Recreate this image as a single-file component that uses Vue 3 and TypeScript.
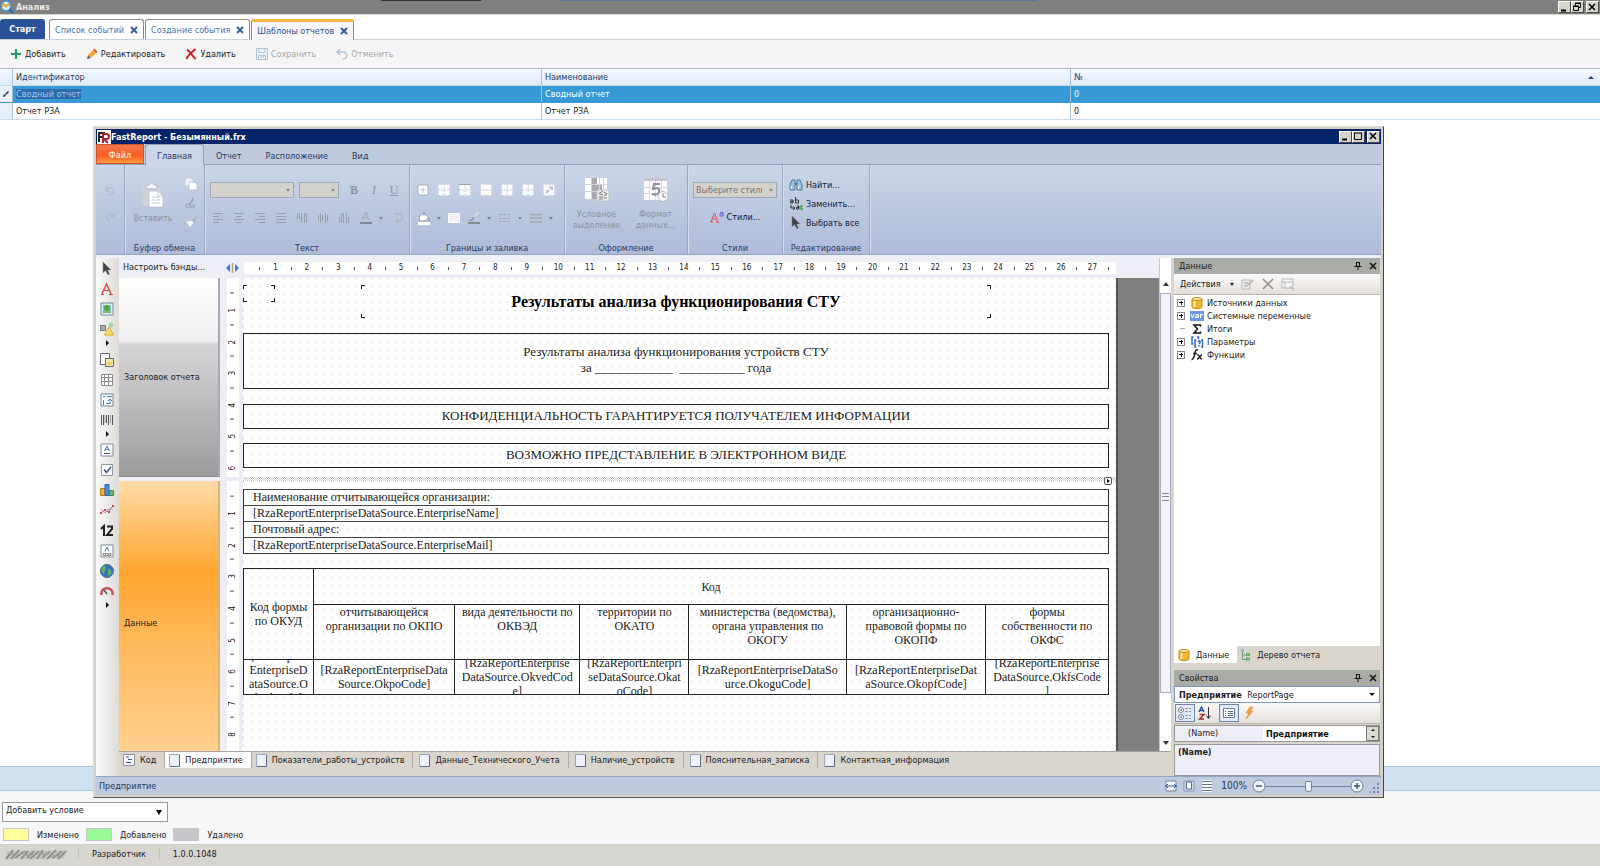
<script setup lang="ts">
import { ref } from 'vue'

interface TreeNode { label: string; icon: string; expandable: boolean }
interface CodeColumn { title: string[]; field: string[] }

const openTabs = ['Список событий', 'Создание события', 'Шаблоны отчетов']
const activeTab = ref(2)

const actions = [
  { label: 'Добавить', icon: 'plus', disabled: false },
  { label: 'Редактировать', icon: 'pencil', disabled: false },
  { label: 'Удалить', icon: 'cross', disabled: false },
  { label: 'Сохранить', icon: 'floppy', disabled: true },
  { label: 'Отменить', icon: 'undo-arrow', disabled: true },
]

const ribbonTabs = ['Главная', 'Отчет', 'Расположение', 'Вид']
const alignIcons = ['al-left', 'al-center', 'al-right', 'al-just', 'va-top', 'va-mid', 'va-bot']
const borderIcons = ['b-all', 'b-none', 'b-top', 'b-mid', 'b-none', 'b-none', 'b-edit']

const tools = [
  { id: 't-arrow', name: 'Выбор' },
  { id: 't-text', name: 'Текст' },
  { id: 't-pic', name: 'Рисунок' },
  { id: 't-shape', name: 'Фигура', more: true },
  { id: 't-sub', name: 'Подотчет' },
  { id: 't-table', name: 'Таблица' },
  { id: 't-matrix', name: 'Матрица' },
  { id: 't-bar', name: 'Штрихкод', more: true },
  { id: 't-rich', name: 'Форматированный текст' },
  { id: 't-check', name: 'Флажок' },
  { id: 't-chart', name: 'Диаграмма' },
  { id: 't-spark', name: 'Спарклайн' },
  { id: 't-zip', name: 'Индекс' },
  { id: 't-cell', name: 'Текст в ячейках' },
  { id: 't-map', name: 'Карта' },
  { id: 't-gauge', name: 'Индикатор', more: true },
]

const columns: CodeColumn[] = [
  { title: ['отчитывающейся', 'организации по ОКПО'], field: ['[RzaReportEnterpriseData', 'Source.OkpoCode]'] },
  { title: ['вида деятельности по', 'ОКВЭД'], field: ['[RzaReportEnterprise', 'DataSource.OkvedCod', 'e]'] },
  { title: ['территории по', 'ОКАТО'], field: ['[RzaReportEnterpri', 'seDataSource.Okat', 'oCode]'] },
  { title: ['министерства (ведомства),', 'органа управления по', 'ОКОГУ'], field: ['[RzaReportEnterpriseDataSo', 'urce.OkoguCode]'] },
  { title: ['организационно-', 'правовой формы по', 'ОКОПФ'], field: ['[RzaReportEnterpriseDat', 'aSource.OkopfCode]'] },
  { title: ['формы', 'собственности по', 'ОКФС'], field: ['[RzaReportEnterprise', 'DataSource.OkfsCode', ']'] },
]
const formField = ['[RzaReport', 'EnterpriseD', 'ataSource.O', 'kudCode]']

const orgRows = [
  'Наименование отчитывающейся организации:',
  '[RzaReportEnterpriseDataSource.EnterpriseName]',
  'Почтовый адрес:',
  '[RzaReportEnterpriseDataSource.EnterpriseMail]',
]

const pages = ['Показатели_работы_устройств', 'Данные_Технического_Учета', 'Наличие_устройств', 'Пояснительная_записка', 'Контактная_информация']

const tree: TreeNode[] = [
  { label: 'Источники данных', icon: 'db', expandable: true },
  { label: 'Системные переменные', icon: 'var', expandable: true },
  { label: 'Итоги', icon: 'sum', expandable: false },
  { label: 'Параметры', icon: 'param', expandable: true },
  { label: 'Функции', icon: 'fx', expandable: true },
]

const legend = [
  { label: 'Изменено', tone: 'yellow' },
  { label: 'Добавлено', tone: 'green' },
  { label: 'Удалено', tone: 'grey' },
]

const zoom = ref(50)
const propertyValue = ref('Предприятие')
</script>

<template>
  <div class="app">
    <svg class="defs" aria-hidden="true">
      <symbol id="plus" viewBox="0 0 12 12"><path d="M6 1v10M1 6h10" stroke="#1e9e62" stroke-width="2" /></symbol>
      <symbol id="pencil" viewBox="0 0 12 12"><path d="M1 11l1-4 3 3z" fill="#4b5a8a" /><path d="M2 7l5-5 3 3-5 5z" fill="#f3a62b" /><path d="M7 2l1.500-1.500 3 3L10 5z" fill="#e0533a" /></symbol>
      <symbol id="cross" viewBox="0 0 12 12"><path d="M2 1.500C5 4 8 8 10.500 11M10.500 1C7 4 3 7 1.500 11" stroke="#d01f1f" stroke-width="2" fill="none" /></symbol>
      <symbol id="floppy" viewBox="0 0 12 12"><path d="M.5.5h11v11H.5zM3 .5v4h6v-4M2.500 11.500v-4h7v4M4 9h4" stroke="#b4c4d6" fill="#edf2f7" /></symbol>
      <symbol id="undo-arrow" viewBox="0 0 12 12"><path d="M4 1L1 4l3 3M1 4h6c5 0 5 6 0 7" stroke="#b3c5da" stroke-width="1.500" fill="none" /></symbol>
      <symbol id="search-app" viewBox="0 0 14 14"><circle cx="6" cy="6" r="5" fill="#d9efff" stroke="#3c8fd0" stroke-width="1.500" /><path d="M2 7l2-3 2 3 2-3 2 2" stroke="#e6a21c" stroke-width="1.500" fill="none" /><path d="M9.500 9.500L13 13" stroke="#2a6db0" stroke-width="2.500" /></symbol>
      <symbol id="w-min" viewBox="0 0 12 11"><path d="M3 8.500h5" stroke="#000" stroke-width="2" /></symbol>
      <symbol id="w-max" viewBox="0 0 12 11"><path d="M2.500 2v6.500h7V2M2 2h8" stroke="#000" fill="none" /></symbol>
      <symbol id="w-rest" viewBox="0 0 12 11"><path d="M4.500 3.500v-2h5v4h-2M2.500 4.500h5v4h-5zM2 4h6M4 1h6" stroke="#000" fill="none" /></symbol>
      <symbol id="w-close" viewBox="0 0 12 11"><path d="M3 2l6 6M9 2L3 8" stroke="#000" stroke-width="1.500" /></symbol>
      <symbol id="fr" viewBox="0 0 14 14"><path d="M0 0h14v14H0z" fill="#fff" /><path d="M2 12V3h6M2 7h4" stroke="#222" stroke-width="2" fill="none" /><path d="M6 13V4h3c4 0 4 5 0 5H7l4 4" stroke="#b3202a" stroke-width="2" fill="none" /></symbol>

      <symbol id="r-undo" viewBox="0 0 12 12"><path d="M2 3v4h4M2.500 6.500C4 3 9 3 9.500 6.500S7 10 5 10" stroke="#a9b3c6" fill="none" /></symbol>
      <symbol id="r-redo" viewBox="0 0 12 12"><path d="M10 3v4H6M9.500 6.500C8 3 3 3 2.500 6.500S4 10 6 10" stroke="#a9b3c6" fill="none" /></symbol>
      <symbol id="paste" viewBox="0 0 24 26"><path d="M1 4h18v20H1z" fill="#cfd2d8" /><path d="M5 3h3c0-3 5-3 5 0h3v4H5z" fill="#f0f1f4" stroke="#b4b8c2" /><path d="M8 9h9l5 5v11H8z" fill="#fff" stroke="#bcc2ce" /><path d="M17 9v5h5M10.500 15h8M10.500 18h9M10.500 21h9" stroke="#c2c8d2" fill="none" /></symbol>
      <symbol id="copy" viewBox="0 0 14 14"><path d="M1 1h6l2 2v6H1z" fill="#f4f5f8" stroke="#c6ccd8" /><path d="M5 5h6l2 2v6H5z" fill="#fff" stroke="#b9c0ce" /></symbol>
      <symbol id="cut" viewBox="0 0 12 12"><path d="M8 0L5 8M9 2L4 8" stroke="#959daf" fill="none" /><circle cx="3" cy="9" r="2" stroke="#959daf" fill="none" /><circle cx="8" cy="9.500" r="1.500" stroke="#959daf" fill="none" /></symbol>
      <symbol id="brush" viewBox="0 0 14 12"><path d="M13 0L8 4l2 2z" fill="#a2a8b4" /><path d="M1 5l7-1 2 3-4 5z" fill="#f2f2f3" stroke="#b9bdc8" /></symbol>
      <symbol id="al-left" viewBox="0 0 12 12"><path d="M1 1.500h10M1 4.500h6M1 7.500h10M1 10.500h6" stroke="#98a0b0" /></symbol>
      <symbol id="al-center" viewBox="0 0 12 12"><path d="M1 1.500h10M3 4.500h6M1 7.500h10M3 10.500h6" stroke="#98a0b0" /></symbol>
      <symbol id="al-right" viewBox="0 0 12 12"><path d="M1 1.500h10M5 4.500h6M1 7.500h10M5 10.500h6" stroke="#98a0b0" /></symbol>
      <symbol id="al-just" viewBox="0 0 12 12"><path d="M1 1.500h10M1 4.500h10M1 7.500h10M1 10.500h10" stroke="#98a0b0" /></symbol>
      <symbol id="va-top" viewBox="0 0 12 12"><path d="M1.500 1v6M3.500 1v6M5.500 1v10M8.500 1v10M10.500 1v10" stroke="#98a0b0" /></symbol>
      <symbol id="va-mid" viewBox="0 0 12 12"><path d="M1.500 3v6M3.500 1v10M5.500 3v6M8.500 1v10M10.500 3v6" stroke="#98a0b0" /></symbol>
      <symbol id="va-bot" viewBox="0 0 12 12"><path d="M1.500 5v6M3.500 1v10M5.500 1v10M8.500 1v10M10.500 5v6" stroke="#98a0b0" /></symbol>
      <symbol id="fcolor" viewBox="0 0 14 14"><path d="M3 9l4-8 3 8M4 6.500h5" stroke="#a0a7b5" fill="none" /><path d="M1 11h12v2H1z" fill="#848890" /></symbol>
      <symbol id="rot" viewBox="0 0 12 12"><path d="M2 2h4c6-1 6 7 0 7H4M6 7L4 9l2 2" stroke="#b6b8be" stroke-width="2" fill="none" /></symbol>
      <symbol id="b-all" viewBox="0 0 12 12"><path d="M1 1h10v10H1z" fill="#fff" stroke="#a5adbd" /><path d="M6 3v6M3 6h6" stroke="#bfc5d0" /></symbol>
      <symbol id="b-none" viewBox="0 0 12 12"><path d="M1 1h10v10H1z" fill="#fff" stroke="#fff" stroke-dasharray="2 1" /><path d="M6 0v12M0 6h12" stroke="#c3c9d6" stroke-dasharray="2 1" /></symbol>
      <symbol id="b-top" viewBox="0 0 12 12"><path d="M1 1h10v10H1z" fill="#fff" stroke="#fff" stroke-dasharray="2 1" /><path d="M6 0v12M0 6h12" stroke="#c3c9d6" stroke-dasharray="2 1" /><path d="M0 .5h12" stroke="#9aa3b5" /></symbol>
      <symbol id="b-mid" viewBox="0 0 12 12"><path d="M1 1h10v10H1z" fill="#fff" stroke="#fff" stroke-dasharray="2 1" /><path d="M0 6h12" stroke="#c3c9d6" stroke-dasharray="2 1" /></symbol>
      <symbol id="b-edit" viewBox="0 0 12 12"><path d="M1 1h10v10H1z" fill="#fafafc" stroke="#fff" stroke-dasharray="2 1" /><path d="M3 9l3-3M6 3.500h3V6" stroke="#b9bfca" stroke-width="2" fill="none" /></symbol>
      <symbol id="bucket" viewBox="0 0 14 14"><path d="M2 6l5-4 5 5-5 3H3z" fill="#fff" stroke="#9ea6b6" /><path d="M7 1v4M12 7v3" stroke="#868e9e" /><path d="M1 11h12v3H1z" fill="#fff" /></symbol>
      <symbol id="swatch" viewBox="0 0 12 12"><path d="M.5 1.500h11v9H.5z" fill="#f1eff3" stroke="#fff" /></symbol>
      <symbol id="pen" viewBox="0 0 14 14"><path d="M12 1L7 6" stroke="#d9dbe0" stroke-width="2" /><path d="M7 6l-2 3-3 .5" stroke="#8f97a6" stroke-width="1.500" fill="none" /><path d="M1 11h12v2H1z" fill="#848890" /></symbol>
      <symbol id="ldash" viewBox="0 0 14 12"><path d="M1 2.500h12M1 6.500h12M1 9.500h12" stroke="#a0a8b8" stroke-dasharray="3 1" /></symbol>
      <symbol id="lwide" viewBox="0 0 14 12"><path d="M1 2.500h12M1 6h12M1 10h12" stroke="#a2a7b0" stroke-width="1.500" /></symbol>
      <symbol id="cond" viewBox="0 0 26 26"><path d="M1 1h22v21H1z" fill="#fff" /><path d="M7 1h6v21H7zM7 8h11v6H7z" fill="#a8a9ad" /><path d="M1 7.500h22M1 14.500h22M7.500 1v21M15.500 1v21M19.500 1v21" stroke="#d0d4db" /><path d="M13 13h12v11H13z" fill="#eee" stroke="#c2c4ca" /><path d="M19 14l-4 2.500 4 1.500M15 20h4M15 22h4M20 15l3 2-3 2M20 21h3" stroke="#777" fill="none" /></symbol>
      <symbol id="fmt" viewBox="0 0 26 26"><path d="M1 1h23v22H1z" fill="#fff" /><path d="M1 1h23v3H1z" fill="#c5c5c9" /><path d="M1 10.500h23M1 16.500h23M6.500 4v19M12.500 4v19M18.500 4v19" stroke="#d3d6dd" /><path d="M17 7h-6l-1 5c5-2 7 0 6 3s-4 3-7 2" stroke="#8c8e93" stroke-width="2" fill="none" /><circle cx="20" cy="19.500" r="5" fill="#f6f6f6" stroke="#b6b8bd" /><path d="M20 16v4h3" stroke="#888" fill="none" /></symbol>
      <symbol id="find" viewBox="0 0 14 12"><path d="M3 1h3v10H1V6zM11 1H8v10h5V6z" fill="#9cc3da" stroke="#4f7fa6" /><path d="M6 5h2" stroke="#3f6f96" stroke-width="2" /><path d="M2.500 7v3M9.500 7v3" stroke="#fff" /></symbol>
      <symbol id="repl" viewBox="0 0 14 14"><path d="M1 3h3v3H1.500V4.500H4M6.500 0v6h3V3h-3M2 8v3h4M4 9l2 2-2 2" stroke="#333" fill="none" /><path d="M8 9h2v3H7.500v-1.500H10" stroke="#333" fill="none" /><path d="M14 9h-2v3h2" stroke="#3aa63a" stroke-width="1.500" fill="none" /></symbol>
      <symbol id="t-arrow" viewBox="0 0 14 14"><path d="M3 0v11l2.500-2.500L8 13l1.500-1-2-4H11z" fill="#444" stroke="#888" stroke-width=".5" /></symbol>
      <symbol id="styles" viewBox="0 0 14 12"><path d="M1 11L4.500 2 8 11M2.500 8h4M0 11h3M6 11h3" stroke="#e0525a" fill="none" /><path d="M10 1.500h3V5h-3V3h3" stroke="#7460d8" fill="none" /></symbol>

      <symbol id="t-text" viewBox="0 0 14 14"><path d="M2 12L6.500 2 11 12" stroke="#d94a45" stroke-width="1.500" fill="none" /><path d="M4 8.500h5M1 12.500h3M9 12.500h4" stroke="#d94a45" /></symbol>
      <symbol id="t-pic" viewBox="0 0 14 14"><path d="M1 1h12v12H1z" fill="#dfeef8" stroke="#6b8c98" /><path d="M3 3h8v6H3z" fill="#7fc0d8" /><circle cx="7" cy="6" r="3" fill="#4fa543" /><path d="M3 9h8v2H3z" fill="#79b56c" /></symbol>
      <symbol id="t-shape" viewBox="0 0 14 14"><path d="M.5 3.500h5v5h-5z" fill="#aaa" stroke="#777" /><circle cx="11" cy="3" r="2.500" fill="#9bd8a0" /><path d="M9 5l4.500 8h-9z" fill="#ffe066" stroke="#d9a520" /></symbol>
      <symbol id="t-sub" viewBox="0 0 14 14"><path d="M.5.5h9v11h-9z" fill="#fff" stroke="#667" /><path d="M5.500 5.500h8v8h-8z" fill="#f5e7a0" stroke="#667" /><path d="M7 9h5v3H7z" fill="#e8ce5c" /></symbol>
      <symbol id="t-table" viewBox="0 0 14 14"><path d="M1.500 1.500h11v11h-11zM1.500 4.500h11M1.500 8.500h11M4.500 1.500v11M8.500 1.500v11" fill="#fff" stroke="#8b8b92" /></symbol>
      <symbol id="t-matrix" viewBox="0 0 14 14"><path d="M1 1h12v12H1z" fill="#fff" stroke="#6d8796" /><path d="M3 3.500h2M7 3.500h5M3.500 7v5M6 10.500h4V7M8 8l2-2 2 2" stroke="#3d7cb5" fill="none" /></symbol>
      <symbol id="t-bar" viewBox="0 0 14 14"><path d="M1.500 2v10M3.500 2v10M6.500 2v8M8.500 2v10M12.500 2v10" stroke="#555" /><path d="M5 2v8M10.500 2v8" stroke="#555" stroke-width=".5" /></symbol>
      <symbol id="t-rich" viewBox="0 0 14 14"><path d="M1 1h12v12H1z" fill="#fff" stroke="#7d8c99" /><path d="M4.500 8L7 3l2.500 5M5.500 6.500h3" stroke="#3d7cc5" fill="none" /><path d="M4 10.500h6" stroke="#555" /></symbol>
      <symbol id="t-check" viewBox="0 0 14 14"><path d="M1.500 1.500h11v11h-11z" fill="#fff" stroke="#8a97a8" /><path d="M4 6.500l2.500 3L11 4" stroke="#35598f" stroke-width="1.500" fill="none" /></symbol>
      <symbol id="t-chart" viewBox="0 0 14 14"><path d="M.5 5.500h4v7h-4z" fill="#f0b429" stroke="#b98512" /><path d="M5 1.500h4v11H5z" fill="#4f8de0" stroke="#2f62b0" /><path d="M9.500 7.500h4v5h-4z" fill="#63b85a" stroke="#3f8f3a" /></symbol>
      <symbol id="t-spark" viewBox="0 0 14 14"><path d="M1 10l4-3 3 2 5-6" stroke="#d9484b" fill="none" /><path d="M1 6l4 4 3-4 5 1" stroke="#6a8ed0" fill="none" stroke-dasharray="2 1" /><path d="M0 9h2v2H0zM4 6h2v2H4zM12 2h2v2h-2zM8 8h2v2H8z" fill="#d9484b" /></symbol>
      <symbol id="t-zip" viewBox="0 0 14 14"><path d="M1 5l3-3v10M7 2.500h5V5l-5 6h6" stroke="#222" stroke-width="2" fill="none" /></symbol>
      <symbol id="t-cell" viewBox="0 0 14 14"><path d="M1 1h12v12H1z" fill="#fff" stroke="#7d8c99" /><path d="M5 7.500L7 3l2 4.500" stroke="#3d7cc5" fill="none" /><path d="M3 9.500h8v2H3zM5.500 9.500v2M8.500 9.500v2" stroke="#888" fill="none" /></symbol>
      <symbol id="t-map" viewBox="0 0 14 14"><circle cx="7" cy="7" r="6.500" fill="#3873c4" stroke="#55697c" /><path d="M4 2c3 0 2 3 1 4s0 5-2 3-2-6 1-7zM9 5c3 0 3 4 1 6s-3-1-2-2-1-4 1-4z" fill="#5db560" /></symbol>
      <symbol id="t-gauge" viewBox="0 0 14 14"><path d="M1.500 11C0 2 14 2 12.500 11" stroke="#c1544f" stroke-width="2.500" fill="none" /><path d="M7 10L4 6" stroke="#555" stroke-width="1.500" /></symbol>

      <symbol id="split" viewBox="0 0 14 10"><path d="M4 1v8L0 5zM9 1v8l4-4z" fill="#3f77cf" /><path d="M6.500 0v10" stroke="#aaa08a" stroke-width="1.500" /></symbol>
      <symbol id="pin" viewBox="0 0 10 10"><path d="M3.500 1v4M6.500 1v4M3 1.500h4M1.500 5.500h7M5 6v3" stroke="#111" fill="none" /></symbol>
      <symbol id="x" viewBox="0 0 10 10"><path d="M2 2l6 6M8 2L2 8" stroke="#111" stroke-width="1.500" /></symbol>
      <symbol id="d-edit" viewBox="0 0 14 12"><path d="M1 2h8v9H1z" fill="#eee" stroke="#b9b9b9" /><path d="M3 5h4M3 8h3M6 8l6-6" stroke="#b2b2b2" stroke-width="1.500" /></symbol>
      <symbol id="d-del" viewBox="0 0 12 12"><path d="M1 1l10 10M11 1L1 11" stroke="#8f8f8f" stroke-width="1.500" /></symbol>
      <symbol id="d-view" viewBox="0 0 14 12"><path d="M1 1h11v9H1zM1 4h11M4 4v6" fill="#f4f4f4" stroke="#bbb" /><path d="M9 8l4 4" stroke="#bbb" stroke-width="1.500" /></symbol>
      <symbol id="db" viewBox="0 0 14 12"><path d="M2 2v8c0 2 10 2 10 0V2" fill="#f2b632" stroke="#c68c14" /><ellipse cx="7" cy="2" rx="5" ry="1.500" fill="#ffe9a6" stroke="#c68c14" /><path d="M4.500 4v6" stroke="#ffe9a6" stroke-width="2" /></symbol>
      <symbol id="var" viewBox="0 0 14 10"><path d="M0 0h14v10H0z" fill="#6f97e4" /><path d="M1 3l1.500 4L4 3M5.500 3.500h3v3h-3V5h3M10.500 7V3.500H13" stroke="#fff" fill="none" /></symbol>
      <symbol id="sum" viewBox="0 0 14 12"><path d="M10.500 3.500V2H4l3.500 4L4 10h6.500V8.500" stroke="#111" stroke-width="1.500" fill="none" /></symbol>
      <symbol id="param" viewBox="0 0 14 12"><path d="M3.500 1H2v7h1.500M6.500 4H5v7h1.500M11 4h1.500v7H11M7 1h1.500v2M8 6c0-2 3-1 2 .5L9 8M9 9v1.500" stroke="#2d6cc0" stroke-width="1.500" fill="none" /></symbol>
      <symbol id="fx" viewBox="0 0 14 12"><path d="M8 1c-3-1-3 3-3.500 5S3 11 1.500 10.500M3 4.500h4M7 6c3-1 2 4 5 4M12 6c-2 0-3 4-5 4" stroke="#222" stroke-width="1.500" fill="none" /></symbol>
      <symbol id="rtree" viewBox="0 0 12 12"><path d="M1 0h3v3H1z" fill="#86b4e8" /><path d="M2.500 3v7.500H6M2.500 6H6" stroke="#6a9f7a" fill="none" /><path d="M6.500 4.500h3v2h-3zM6.500 9h3v2h-3z" fill="#bfe8b8" stroke="#4c9f55" /></symbol>
      <symbol id="p-cat" viewBox="0 0 14 14"><circle cx="3" cy="4" r="2.500" fill="#fff" stroke="#6d86a8" /><circle cx="3" cy="11" r="2.500" fill="#fff" stroke="#6d86a8" /><path d="M2 4h2M2 11h2M3 3v2M3 10v2" stroke="#234" stroke-width=".5" /><path d="M7 2.500h6M7 5.500h6M7 9.500h6M7 12.500h6" stroke="#909cae" stroke-dasharray="3 1" /></symbol>
      <symbol id="p-az" viewBox="0 0 14 14"><path d="M1 6l2.500-5L6 6M2 4.500h3" stroke="#34529a" stroke-width="1.500" fill="none" /><path d="M1.500 8.500H6L1.500 13H6" stroke="#a33636" stroke-width="1.500" fill="none" /><path d="M10.500 1v11M8.500 9.500l2 3 2-3" stroke="#333" fill="none" /></symbol>
      <symbol id="p-prop" viewBox="0 0 14 14"><path d="M1.500 2.500h11v9h-11z" fill="#fff" stroke="#6b7ba0" /><path d="M3 5.500h1M3 7.500h1M3 9.500h1M6 5.500h5M6 7.500h5M6 9.500h5" stroke="#567" /></symbol>
      <symbol id="p-ev" viewBox="0 0 14 14"><path d="M8 1L4 7h3l-3 6 7-8H8l3-4z" fill="#f4a63a" stroke="#c9752a" stroke-width=".5" /></symbol>
      <symbol id="page" viewBox="0 0 11 13"><path d="M.5.5h10v12H.5z" fill="#edf1fc" stroke="#9aa4b8" /><path d="M1 12.500h9.500V1" stroke="#5c6a8c" fill="none" /></symbol>
      <symbol id="code" viewBox="0 0 12 12"><path d="M.5.5h11v11H.5z" fill="#f6f8fd" stroke="#8b95aa" /><path d="M3 3h3M5 5.500h4M3 8.500h5" stroke="#38578f" /></symbol>
      <symbol id="s-width" viewBox="0 0 12 12"><path d="M1 1h10v10H1z" fill="#f2f5fa" stroke="#77869f" /><path d="M0 6h12M3 4L1 6l2 2M9 4l2 2-2 2" stroke="#2f5ca5" fill="none" /></symbol>
      <symbol id="s-page" viewBox="0 0 12 12"><path d="M1 1h10v10H1z" fill="#cfd9ea" stroke="#8795ae" /><path d="M3.500 2h5v7h-5z" fill="#fff" stroke="#5c6c8c" /></symbol>
      <symbol id="s-list" viewBox="0 0 12 12"><path d="M1 0h10v12H1z" fill="#f7f9fc" /><path d="M1 1.500h10M1 4.500h10M1 7.500h10M1 10.500h10" stroke="#66748c" /></symbol>
      <symbol id="minus-c" viewBox="0 0 14 14"><circle cx="7" cy="7" r="6" fill="#eef2f9" stroke="#71809b" /><path d="M4 7h6" stroke="#4a566e" stroke-width="1.500" /></symbol>
      <symbol id="plus-c" viewBox="0 0 14 14"><circle cx="7" cy="7" r="6" fill="#eef2f9" stroke="#71809b" /><path d="M4 7h6M7 4v6" stroke="#4a566e" stroke-width="1.500" /></symbol>
      <symbol id="grip" viewBox="0 0 10 10"><path d="M7 0h2v2H7zM7 4h2v2H7zM3 4h2v2H3zM7 8h2v2H7zM3 8h2v2H3z" fill="#7588b0" /><path d="M0 8h1v2H0z" fill="#7588b0" /></symbol>
      <symbol id="row-edit" viewBox="0 0 8 8"><path d="M1 7l1-3 2 2zM3 4l3-3 1 1-3 3z" fill="#1b2b4b" /></symbol>
      <symbol id="scribble" viewBox="0 0 66 14"><path d="M4 4h60l-4 8H2z" fill="#c3c2be" /><path d="M3 12l7-9M8 12l8-9M12 11l10-7M18 12l7-8M24 11l7-7M27 12l9-8M34 12l6-9M39 11l8-7M44 12l9-9M50 11l9-7M55 12l8-8" stroke="#85857f" stroke-width="1.500" fill="none" /><path d="M5 7h10M20 8h12M36 7h10M48 9h10" stroke="#a2a19c" stroke-width="1.500" /></symbol>
    </svg>

    <header class="main-title">
      <svg class="i14"><use href="#search-app" /></svg>
      <h1>Анализ</h1>
      <div class="win-buttons">
        <button aria-label="Свернуть"><svg><use href="#w-min" /></svg></button>
        <button aria-label="Восстановить"><svg><use href="#w-rest" /></svg></button>
        <button class="close" aria-label="Закрыть"><svg><use href="#w-close" /></svg></button>
      </div>
    </header>

    <nav class="tabs">
      <button class="start">Старт</button>
      <div v-for="(t, i) in openTabs" :key="t" class="tab" :class="{ active: i === activeTab }">
        <button class="tab-name" @click="activeTab = i">{{ t }}</button>
        <button class="tab-x" :aria-label="'Закрыть ' + t"><svg viewBox="0 0 8 8"><path d="M1 1l6 6M7 1L1 7" stroke="#35609f" stroke-width="2" /></svg></button>
      </div>
    </nav>

    <div class="actions">
      <button v-for="a in actions" :key="a.label" :disabled="a.disabled">
        <svg class="i12"><use :href="'#' + a.icon" /></svg>{{ a.label }}
      </button>
    </div>

    <main class="desk">
      <table class="list">
        <colgroup><col class="c-ind" /><col /><col /><col /></colgroup>
        <thead>
          <tr><th></th><th>Идентификатор</th><th>Наименование</th><th>№<i class="sort"></i></th></tr>
        </thead>
        <tbody>
          <tr class="sel"><td><svg class="i8"><use href="#row-edit" /></svg></td><td><span class="hl">Сводный отчет</span></td><td>Сводный отчет</td><td>0</td></tr>
          <tr><td></td><td>Отчет РЗА</td><td>Отчет РЗА</td><td>0</td></tr>
        </tbody>
      </table>
      <div class="band-blue"></div>
    </main>

    <footer class="bottom">
      <label class="cond">
        <select aria-label="Добавить условие"><option>Добавить условие</option></select>
      </label>
      <div class="legend">
        <span v-for="l in legend" :key="l.label"><i :class="l.tone"></i>{{ l.label }}</span>
      </div>
      <div class="status">
        <svg class="scrib"><use href="#scribble" /></svg>
        <span>Разработчик</span>
        <span>1.0.0.1048</span>
      </div>
    </footer>

    <section class="window">
      <header class="w-title">
        <svg class="i14"><use href="#fr" /></svg>
        <h2>FastReport - Безымянный.frx</h2>
        <div class="win-buttons">
          <button aria-label="Свернуть"><svg><use href="#w-min" /></svg></button>
          <button aria-label="Развернуть"><svg><use href="#w-max" /></svg></button>
          <button class="close" aria-label="Закрыть"><svg><use href="#w-close" /></svg></button>
        </div>
      </header>

      <nav class="r-tabs">
        <button class="file">Файл</button>
        <button v-for="(t, i) in ribbonTabs" :key="t" :class="{ on: i === 0 }">{{ t }}</button>
      </nav>

      <div class="ribbon">
        <div class="g g-undo">
          <button aria-label="Отменить"><svg class="i12"><use href="#r-undo" /></svg></button>
          <button aria-label="Повторить"><svg class="i12"><use href="#r-redo" /></svg></button>
        </div>
        <div class="g g-clip">
          <div class="g-body">
            <button class="big"><svg class="i26"><use href="#paste" /></svg>Вставить</button>
            <div class="stack">
              <button aria-label="Копировать"><svg class="i14"><use href="#copy" /></svg></button>
              <button aria-label="Вырезать"><svg class="i12"><use href="#cut" /></svg></button>
              <button aria-label="Формат по образцу"><svg class="i14"><use href="#brush" /></svg></button>
            </div>
          </div>
          <h3>Буфер обмена</h3>
        </div>
        <div class="g g-text">
          <div class="g-body rows">
            <div class="line">
              <label class="combo wide"><select aria-label="Шрифт" disabled><option></option></select></label>
              <label class="combo narrow"><select aria-label="Размер" disabled><option></option></select></label>
              <button class="fs b">B</button><button class="fs it">I</button><button class="fs u">U</button>
            </div>
            <div class="line icons">
              <button v-for="a in alignIcons" :key="a" :aria-label="a"><svg class="i12"><use :href="'#' + a" /></svg></button>
              <button class="drop" aria-label="Цвет текста"><svg class="i14"><use href="#fcolor" /></svg></button>
              <button aria-label="Поворот"><svg class="i12"><use href="#rot" /></svg></button>
            </div>
          </div>
          <h3>Текст</h3>
        </div>
        <div class="g g-border">
          <div class="g-body rows">
            <div class="line icons">
              <button v-for="(b, i) in borderIcons" :key="i" :aria-label="'Граница ' + (i + 1)"><svg class="i12"><use :href="'#' + b" /></svg></button>
            </div>
            <div class="line icons spread">
              <button class="drop" aria-label="Заливка"><svg class="i14"><use href="#bucket" /></svg></button>
              <button aria-label="Стиль заливки"><svg class="i12"><use href="#swatch" /></svg></button>
              <button class="drop" aria-label="Цвет линии"><svg class="i14"><use href="#pen" /></svg></button>
              <button class="drop" aria-label="Стиль линии"><svg class="i14"><use href="#ldash" /></svg></button>
              <button class="drop" aria-label="Толщина линии"><svg class="i14"><use href="#lwide" /></svg></button>
            </div>
          </div>
          <h3>Границы и заливка</h3>
        </div>
        <div class="g g-design">
          <div class="g-body">
            <button class="big"><svg class="i26"><use href="#cond" /></svg>Условное<br />выделение</button>
            <button class="big"><svg class="i26"><use href="#fmt" /></svg>Формат<br />данных...</button>
          </div>
          <h3>Оформление</h3>
        </div>
        <div class="g g-styles">
          <div class="g-body rows">
            <label class="combo full"><select aria-label="Стиль" disabled><option>Выберите стиль</option></select></label>
            <button class="cmd"><svg class="i14"><use href="#styles" /></svg>Стили...</button>
          </div>
          <h3>Стили</h3>
        </div>
        <div class="g g-edit">
          <div class="g-body cmds">
            <button class="cmd"><svg class="i14"><use href="#find" /></svg>Найти...</button>
            <button class="cmd"><svg class="i14"><use href="#repl" /></svg>Заменить...</button>
            <button class="cmd"><svg class="i14"><use href="#t-arrow" /></svg>Выбрать все</button>
          </div>
          <h3>Редактирование</h3>
        </div>
      </div>

      <div class="work">
        <div class="toolbox">
          <template v-for="t in tools" :key="t.id">
            <button :aria-label="t.name"><svg class="i14"><use :href="'#' + t.id" /></svg></button>
            <i v-if="t.more" class="more"></i>
          </template>
        </div>

        <div class="center">
          <div class="designer">
            <div class="bands">
              <button class="cfg">Настроить бэнды...</button>
              <div class="band title-band">Заголовок отчета</div>
              <div class="band data-band">Данные</div>
            </div>
            <div class="surface">
              <div class="top">
                <svg class="split"><use href="#split" /></svg>
                <div class="hruler"><span v-for="n in 27" :key="n">{{ n }}</span><span class="tail"></span></div>
              </div>
              <div class="canvas">
                <div class="vrulers">
                  <div class="vruler first"><span v-for="n in 6" :key="n">{{ n }}</span></div>
                  <div class="vruler"><span v-for="n in 8" :key="n">{{ n }}</span></div>
                </div>
                <div class="sheet">
                  <div class="zone zone-title">
                    <div class="heads">
                      <div class="obj small"><i></i></div>
                      <div class="obj title"><i></i>Результаты анализа функционирования СТУ</div>
                    </div>
                    <div class="box tall">Результаты анализа функционирования устройств СТУ<br />за ____________&nbsp; __________ года</div>
                    <div class="box">КОНФИДЕНЦИАЛЬНОСТЬ ГАРАНТИРУЕТСЯ ПОЛУЧАТЕЛЕМ ИНФОРМАЦИИ</div>
                    <div class="box last">ВОЗМОЖНО ПРЕДСТАВЛЕНИЕ В ЭЛЕКТРОННОМ ВИДЕ</div>
                  </div>
                  <div class="gap"><i class="expander"></i></div>
                  <div class="zone zone-data">
                    <div class="org"><div v-for="r in orgRows" :key="r">{{ r }}</div></div>
                    <table class="codes">
                      <colgroup><col class="k0" /><col class="k1" /><col class="k2" /><col class="k3" /><col class="k4" /><col class="k5" /><col class="k6" /></colgroup>
                      <tbody>
                        <tr class="h1"><th rowspan="2">Код формы<br />по ОКУД</th><th colspan="6">Код</th></tr>
                        <tr class="h2"><th v-for="c in columns" :key="c.title[0]"><div v-for="l in c.title" :key="l">{{ l }}</div></th></tr>
                        <tr class="h3">
                          <td><div class="clip"><span v-for="l in formField" :key="l">{{ l }}</span></div></td>
                          <td v-for="c in columns" :key="c.title[0]"><div class="clip"><span v-for="l in c.field" :key="l">{{ l }}</span></div></td>
                        </tr>
                      </tbody>
                    </table>
                  </div>
                </div>
                <div class="void"></div>
              </div>
            </div>
            <div class="vscroll"><i class="up"></i><div class="thumb"></div><i class="down"></i></div>
          </div>
          <nav class="page-tabs">
            <button><svg class="i12"><use href="#code" /></svg>Код</button>
            <button class="on"><svg class="ip"><use href="#page" /></svg>Предприятие</button>
            <button v-for="p in pages" :key="p"><svg class="ip"><use href="#page" /></svg>{{ p }}</button>
          </nav>
        </div>

        <aside class="side">
          <section class="panel data">
            <header class="p-title"><h3>Данные</h3><button aria-label="Закрепить"><svg class="i10"><use href="#pin" /></svg></button><button aria-label="Закрыть панель"><svg class="i10"><use href="#x" /></svg></button></header>
            <div class="p-bar">
              <button class="drop dark">Действия</button>
              <button aria-label="Изменить"><svg class="i14"><use href="#d-edit" /></svg></button>
              <button aria-label="Удалить"><svg class="i12"><use href="#d-del" /></svg></button>
              <button aria-label="Просмотр"><svg class="i14"><use href="#d-view" /></svg></button>
            </div>
            <ul class="tree">
              <li v-for="n in tree" :key="n.label">
                <i class="exp" :class="{ none: !n.expandable }"></i><svg class="i14"><use :href="'#' + n.icon" /></svg>{{ n.label }}
              </li>
            </ul>
            <nav class="p-tabs">
              <button class="on"><svg class="i14"><use href="#db" /></svg>Данные</button>
              <button><svg class="i12"><use href="#rtree" /></svg>Дерево отчета</button>
            </nav>
          </section>
          <section class="panel props">
            <header class="p-title"><h3>Свойства</h3><button aria-label="Закрепить"><svg class="i10"><use href="#pin" /></svg></button><button aria-label="Закрыть панель"><svg class="i10"><use href="#x" /></svg></button></header>
            <button class="object"><b>Предприятие</b> ReportPage<i></i></button>
            <div class="p-bar tools">
              <button class="on" aria-label="По категориям"><svg class="i14"><use href="#p-cat" /></svg></button>
              <button aria-label="По алфавиту"><svg class="i14"><use href="#p-az" /></svg></button>
              <button class="on sep" aria-label="Свойства"><svg class="i14"><use href="#p-prop" /></svg></button>
              <button aria-label="События"><svg class="i14"><use href="#p-ev" /></svg></button>
            </div>
            <div class="prop-row">
              <label for="prop-name">(Name)</label>
              <input id="prop-name" v-model="propertyValue" />
              <span class="spin"><i class="up"></i><i class="down"></i></span>
            </div>
            <div class="help">(Name)</div>
          </section>
        </aside>
      </div>

      <footer class="w-status">
        <span>Предприятие</span>
        <div class="zoom">
          <button aria-label="По ширине"><svg class="i12"><use href="#s-width" /></svg></button>
          <button aria-label="Страница"><svg class="i12"><use href="#s-page" /></svg></button>
          <button aria-label="Список"><svg class="i12"><use href="#s-list" /></svg></button>
          <span class="pct">100%</span>
          <button aria-label="Уменьшить"><svg class="i14"><use href="#minus-c" /></svg></button>
          <input v-model="zoom" type="range" min="0" max="100" aria-label="Масштаб" />
          <button aria-label="Увеличить"><svg class="i14"><use href="#plus-c" /></svg></button>
          <svg class="i10 gripper"><use href="#grip" /></svg>
        </div>
      </footer>
    </section>
  </div>
</template>

<style>
html, body, #app { height: 100%; }
body { margin: 0; }
</style>

<style scoped>
* { box-sizing: border-box; }
.app {
  position: relative;
  display: flex;
  flex-direction: column;
  min-height: 100%;
  overflow: hidden;
  background: #fff;
  color: #222;
  font-family: "DejaVu Sans Condensed", "DejaVu Sans", sans-serif;
  font-size: 9px;
  line-height: 12px;
}
.defs { position: absolute; width: 0; height: 0; }
button { margin: 0; padding: 0; border: 0; background: none; color: inherit; font: inherit; line-height: inherit; white-space: nowrap; }
h1, h2, h3 { margin: 0; font: inherit; line-height: inherit; }
svg { display: block; flex: none; }
.i8 { width: 8px; height: 8px; }
.i10 { width: 10px; height: 10px; }
.i12 { width: 12px; height: 12px; }
.i14 { width: 14px; height: 14px; }
.ip { width: 11px; height: 13px; }
.i26 { width: 26px; height: 26px; }

/* main frame */
.main-title { display: flex; align-items: center; height: 15px; gap: 2px; background: #808080; border-bottom: 1px solid #d4d4d0; background-image: linear-gradient(#333, #333), linear-gradient(#5577a0, #5577a0); background-repeat: no-repeat; background-size: 100px 1px, 475px 1px; background-position: 381px 0, 562px 0; color: #ececec; }
.main-title h1 { flex: 1; font-weight: bold; }
.win-buttons { display: flex; padding-right: 1px; }
.win-buttons button { width: 13px; height: 12px; background: #d6d3cb; border: 1px solid; border-color: #fff #444 #444 #fff; }
.win-buttons svg { width: 12px; height: 11px; margin: -1px; }
.win-buttons .close { margin-left: 2px; }
.tabs { display: flex; align-items: flex-end; height: 25px; padding-top: 4px; border-bottom: 1px solid #ccd3d8; }
.start { width: 45px; height: 20px; margin-right: 4px; border-radius: 3px 3px 0 0; background: #2a5298; color: #fff; font-weight: bold; }
.tab { display: flex; align-items: center; height: 20px; margin-right: 1px; padding: 0 5px; gap: 6px; border: 1px solid #8a8a8a; border-bottom: 0; border-radius: 3px 3px 0 0; background: #fff; color: #4a74ae; }
.tab.active { height: 21px; margin-bottom: -1px; border-top: 3px solid #f5b93e; background: #f7f7f7; color: #2c4f96; }
.tab-x svg { width: 8px; height: 8px; }
.actions { display: flex; align-items: center; height: 29px; padding: 0 10px 1px; gap: 20px; border-bottom: 1px solid #a9bccb; background: #f5f5f5; }
.actions button { display: flex; align-items: center; gap: 3px; }
.actions button:disabled { color: #a9a9a9; }
.desk { display: flex; flex: 1; flex-direction: column; }
.list { width: 100%; border-collapse: separate; border-spacing: 0; table-layout: fixed; text-align: left; }
.c-ind { width: 13px; }
.list th, .list td { height: 17px; padding: 0 3px; border-right: 1px solid #a9bfd3; border-bottom: 1px solid #c9dbe9; white-space: nowrap; }
.list th { background: linear-gradient(#f2f7ff, #dfeafa); color: #253c62; font-weight: normal; }
.list td:first-child { padding: 0 2px; background: #e6effa; }
.list th:last-child { position: relative; }
.list td:last-child, .list th:last-child { border-right: 0; }
.list .sel td { background: #3799d5; border-bottom-color: #3799d5; color: #fff; }
.list .sel td:first-child { background: #e6effa; }
.hl { background: #2a6cae; color: #a9c5e2; }
.sort { position: absolute; right: 6px; top: 7px; border: 3px solid transparent; border-top: 0; border-bottom-color: #2d4470; }
.band-blue { height: 25px; margin-top: auto; border: 1px solid #a9c4de; border-width: 1px 0; background: #cfe0ef; }
.bottom { background: #f7f7f7; }
.cond { display: block; position: relative; width: 166px; margin: 11px 2px 6px; }
.cond select { display: block; appearance: none; width: 100%; height: 20px; padding: 0 3px 5px; border: 1px solid #999; border-radius: 0; background: #fff; color: #222; font: inherit; }
.cond::after { content: ""; position: absolute; right: 6px; top: 8px; border: 3px solid transparent; border-top: 5px solid #000; border-bottom: 0; }
.legend { display: flex; height: 16px; padding-left: 3px; }
.legend span { display: flex; align-items: flex-start; gap: 8px; margin-right: 7px; line-height: 14px; }
.legend i { width: 26px; height: 13px; border: 1px solid #c9c5cb; }
.yellow { background: #ffff9c; }
.green { background: #98fb98; }
.grey { background: #c8c6ca; }
.status { display: flex; align-items: center; height: 22px; padding-bottom: 3px; border-top: 1px solid #cfcfcb; background: #d6d5d0; }
.status span { padding: 0 13px; border-left: 1px solid #c6c5c1; line-height: 12px; }
.scrib { width: 66px; height: 14px; margin: 0 9px 0 3px; }

/* designer window */
.window { position: absolute; top: 126px; right: 216px; bottom: 68px; left: 93px; display: flex; flex-direction: column; padding: 2px; border: 1px solid #d9dccf; border-right: 1px solid #444; border-bottom: 1px solid #555; background: #d4d2c8; }
.w-title { display: flex; align-items: center; height: 15px; padding-left: 1px; background: #06246a; color: #fff; }
.w-title h2 { flex: 1; font-weight: bold; }
.r-tabs { display: flex; height: 21px; border-bottom: 1px solid #93a3bd; background: #bfcade; color: #27395d; }
.r-tabs button { margin-bottom: -1px; padding: 2px 12px 0; }
.r-tabs .file { width: 48px; margin: 0 1px 0 0; padding: 2px 0 0; border: 1px solid #c9532a; background: linear-gradient(#f4774e, #fb5e22 60%, #ff9a3c); color: #fff; }
.r-tabs .on { padding: 2px 11px 0; border: 1px solid #93a3bd; border-bottom: 0; border-radius: 3px 3px 0 0; background: #ccd6e8; }
.ribbon { display: flex; height: 90px; border-bottom: 1px solid #93a3bd; background: linear-gradient(#ccd6e8, #bcc8df 50%, #afbbd8); color: #2b3e66; }
.g { display: flex; flex: none; flex-direction: column; border-right: 1px solid #9aa9c3; box-shadow: 1px 0 #d5deec; }
.g h3 { text-align: center; }
.g-body { display: flex; flex: 1; color: #8b93a2; }
.g button { display: flex; flex: none; align-items: center; justify-content: center; }
.g-undo { width: 29px; align-items: center; padding-top: 19px; gap: 14px; }
.g-clip { width: 80px; }
.g-clip .big { width: 56px; padding-top: 17px; gap: 4px; }
.g .big { flex-direction: column; justify-content: flex-start; }
.stack { display: flex; flex-direction: column; width: 19px; padding-top: 12px; gap: 6px; align-items: center; }
.g-text { width: 205px; }
.g-border { width: 155px; }
.g-design { width: 123px; }
.g-design .g-body { padding: 12px 0 0 2px; }
.g-design .big { width: 59px; gap: 6px; line-height: 11px; }
.g-styles { width: 95px; }
.g-edit { width: 87px; }
.rows { flex-direction: column; padding: 17px 5px 0; gap: 12px; }
.line { display: flex; align-items: center; height: 16px; }
.g-text .line.icons { padding-left: 2px; gap: 9px; }
.g-border .line.icons { padding-left: 2px; gap: 9px; }
.g-border .line.spread { gap: 7px; }
.combo { position: relative; display: block; margin-right: 5px; }
.combo select { display: block; appearance: none; width: 100%; height: 16px; padding: 0 14px 0 2px; border: 1px solid #9ea7b5; border-radius: 0; background: #d4d2cc; color: #777; font: inherit; opacity: 1; }
.combo::after, .drop::after { content: ""; border: 2px solid transparent; border-top: 3px solid #7c8597; border-bottom: 0; }
.combo::after { position: absolute; right: 4px; top: 7px; }
.wide { width: 87px; }
.narrow { width: 42px; }
.full { width: 84px; margin: 0; }
.drop::after { margin-left: 6px; }
.dark::after { border-top-color: #222; }
.fs { width: 20px; font: 12px "Liberation Serif", serif; }
.b { font-weight: bold; }
.it { font-style: italic; }
.u { text-decoration: underline; }
.cmds { flex-direction: column; padding: 13px 0 0 6px; gap: 5px; }
.g .cmd { justify-content: flex-start; gap: 3px; height: 14px; color: #10203f; }
.g-styles .cmd { align-self: center; }

.work { display: flex; flex: 1; min-height: 0; border-top: 3px solid #eef1f8; }
.toolbox { display: flex; flex: none; flex-direction: column; align-items: center; justify-content: space-between; width: 23px; padding: 4px 2px 168px 0; background: linear-gradient(90deg, #fafafa, #dedad6); }
.more { height: 6px; margin: -2px 0 0 2px; border: 3px solid transparent; border-left: 3px solid #111; border-right: 0; }
.center { display: flex; flex: 1; flex-direction: column; min-width: 0; }
.designer { display: flex; flex: 1; min-height: 0; background: #eeeef7; }
.bands { display: flex; flex: none; flex-direction: column; width: 101px; }
.cfg { height: 20px; padding: 0 0 2px 4px; text-align: left; }
.band { display: flex; align-items: center; padding-left: 5px; border-right: 2px solid #a9a9b0; }
.title-band { height: 199px; background: linear-gradient(#fff, #efedf0 32%, #d6d5d7 33%, #9c9c9e); border-bottom: 1px solid #888; }
.data-band { flex: 1; margin-top: 4px; padding-top: 14px; border-right-color: #d9b27a; background: linear-gradient(#ffdba8, #ffa62e 34%, #ffb95c 60%, #ffd08e); }
.surface { display: flex; flex: 1; flex-direction: column; min-width: 0; }
.top { display: flex; align-items: center; height: 20px; }
.split { width: 14px; height: 10px; margin: 0 4px 0 6px; }
.hruler { display: grid; flex: 1; grid-template-columns: repeat(27, 4fr) 3fr; height: 12px; margin-right: 43px; background: #fff; font-size: 8px; line-height: 12px; }
.hruler span { position: relative; justify-self: end; width: 16px; margin-right: -8px; text-align: center; }
.hruler span::before { content: ""; position: absolute; top: 5px; left: -8px; width: 1px; height: 3px; background: #555; }
.hruler .tail::before { left: 0; }
.canvas { display: flex; flex: 1; min-height: 0; }
.vrulers { display: flex; flex: none; flex-direction: column; width: 12px; margin: 0 4px 0 7px; gap: 4px; }
.vruler { display: grid; flex: 1; grid-auto-rows: 1fr; overflow: hidden; padding-bottom: 17px; background: #fff; font-size: 8px; line-height: 12px; }
.vruler.first { flex: none; height: 199px; padding-bottom: 10px; }
.vruler span { position: relative; width: 12px; margin-bottom: -3px; writing-mode: vertical-rl; transform: rotate(180deg); text-align: left; }
.vruler span::after { content: ""; position: absolute; bottom: 15px; left: 5px; width: 4px; height: 1px; background: #555; }
.sheet { display: flex; flex: 1; flex-direction: column; min-width: 0; background: #fff; font-family: "Liberation Serif", serif; font-size: 13px; line-height: 14px; color: #222; }
.void { width: 43px; border-left: 2px solid #555; background: #808080; }
.zone { padding-right: 7px; background: radial-gradient(circle at 0 0, #bdbdbd 1px, transparent 1px) 0 0 / 8px 8px; }
.zone-title { height: 199px; padding-top: 7px; }
.heads { display: flex; align-items: flex-start; height: 48px; }
.obj { position: relative; display: flex; align-items: center; justify-content: center; }
.obj::before, .obj::after, .obj i::before, .obj i::after { content: ""; position: absolute; width: 3px; height: 3px; border: 0 solid #222; }
.obj::before { top: 0; left: 0; border-width: 1px 0 0 1px; }
.obj::after { top: 0; right: 0; border-width: 1px 1px 0 0; }
.obj i::before { bottom: 0; left: 0; border-width: 0 0 1px 1px; }
.obj i::after { right: 0; bottom: 0; border-width: 0 1px 1px 0; }
.small { width: 32px; height: 17px; }
.title { flex: 1; height: 33px; margin: 0 118px 0 86px; color: #000; font-size: 16px; font-weight: bold; }
.box { display: flex; align-items: center; justify-content: center; height: 25px; margin-bottom: 14px; padding-bottom: 2px; border: 1px solid #222; text-align: center; line-height: 16px; }
.tall { height: 56px; margin-bottom: 15px; }
.last { margin-bottom: 0; }
.gap { position: relative; height: 4px; background: repeating-conic-gradient(#c9c9c9 0 25%, #fff 0 50%) 0 0 / 2px 2px; }
.expander { position: absolute; right: 4px; top: 0; width: 8px; height: 8px; border: 1px solid #555; border-radius: 2px; background: #fff; }
.expander::after { content: ""; position: absolute; left: 2px; top: 1px; border: 2px solid transparent; border-left: 3px solid #000; border-right: 0; }
.zone-data { flex: 1; padding-top: 8px; font-size: 12px; }
.org { margin-bottom: 14px; border: 1px solid #333; border-top: 0; }
.org div { height: 16px; padding-left: 9px; border-top: 1px solid #444; line-height: 14px; }
.codes { width: 100%; border-collapse: collapse; table-layout: fixed; text-align: center; }
.codes th, .codes td { padding: 0; border: 1px solid #222; font-weight: normal; white-space: nowrap; }
.k0 { width: 8.1%; } .k1 { width: 16.3%; } .k2 { width: 14.5%; } .k3 { width: 12.6%; } .k4 { width: 18.2%; } .k5 { width: 16.1%; } .k6 { width: 14.2%; }
.h1 { height: 36px; }
.h2 { height: 55px; }
.h2 th { vertical-align: top; }
.clip { display: flex; flex-direction: column; align-items: center; justify-content: center; height: 34px; overflow: hidden; }
.clip span { flex: none; }
.vscroll { display: flex; flex: none; flex-direction: column; align-items: center; width: 12px; border-left: 1px solid #c5c7d2; background: #fff; }
.vscroll i, .spin i, .object i { border: 3px solid transparent; }
.vscroll .up { margin: 24px 0 7px; border-top: 0; border-bottom: 4px solid #333; }
.vscroll .down { margin: 6px 0; border-bottom: 0; border-top: 4px solid #333; }
.vscroll .thumb { flex: 1; align-self: stretch; margin-bottom: 42px; border: 1px solid #a9adc0; background: linear-gradient(#888, #888) center 50% / 7px 1px no-repeat, linear-gradient(#888, #888) center 51% / 7px 1px no-repeat, linear-gradient(#888, #888) center 52% / 7px 1px no-repeat, #f2f3fb; }
.page-tabs { display: flex; align-items: flex-start; height: 25px; border-top: 1px solid #a7a59c; background: #dad5cd; }
.page-tabs button { display: flex; align-items: center; height: 16px; padding: 0 8px 0 4px; gap: 5px; }
.page-tabs button + button { border-left: 1px solid #b3aea6; }
.page-tabs .on + button ~ button { padding-left: 6px; }
.page-tabs .on { background: #fff; border-radius: 0 0 2px 2px; }

.side { display: flex; flex: none; flex-direction: column; width: 210px; padding: 0 1px 0 3px; gap: 7px; background: #d9d5cd; }
.panel { display: flex; flex-direction: column; }
.data { flex: 1; }
.p-title { display: flex; align-items: center; height: 16px; padding: 0 2px 0 5px; gap: 5px; background: #a9aba6; color: #222; }
.p-title h3 { flex: 1; }
.p-bar { display: flex; align-items: center; height: 21px; padding-left: 6px; gap: 12px; border-bottom: 1px solid #b8b3ab; background: linear-gradient(#fbfafa, #e3dfdb); }
.p-bar button { display: flex; align-items: center; }
.p-bar .drop::after { margin-left: 9px; }
.data .p-bar { gap: 7px; }
.tree { flex: 1; margin: 0; padding: 1px 3px; background: #fff; list-style: none; }
.tree li { display: flex; align-items: center; height: 13px; gap: 3px; }
.tree svg { height: 12px; margin-left: 2px; }
.exp { width: 8px; height: 8px; border: 1px solid #888; background: linear-gradient(#000, #000) center / 4px 1px no-repeat, linear-gradient(#000, #000) center / 1px 4px no-repeat, #fff; }
.exp.none { border: 0; background: linear-gradient(#aaa, #aaa) right center / 5px 1px no-repeat; }
.p-tabs { display: flex; height: 17px; }
.p-tabs button { display: flex; align-items: center; padding: 0 8px 0 3px; gap: 5px; }
.p-tabs .on { background: #fff; }
.object { position: relative; display: block; height: 17px; padding-left: 4px; border: 1px solid #7796c9; background: #fff; text-align: left; }
.object b { margin-right: 3px; }
.object i { position: absolute; right: 4px; top: 6px; border-top: 3px solid #111; border-bottom: 0; }
.p-bar.tools { padding-left: 1px; gap: 0; }
.tools button { width: 20px; height: 18px; justify-content: center; }
.tools .on { border: 1px solid #6d86b5; background: #e3e9f4; }
.tools .sep { margin: 0 0 0 4px; }
.prop-row { display: flex; height: 17px; margin-top: 1px; border: 1px solid #999; background: #fff; }
.prop-row label { width: 88px; padding-left: 13px; background: #eeeef7; line-height: 15px; }
.prop-row input { flex: 1; min-width: 0; padding: 0 3px; border: 0; color: #111; font: inherit; font-weight: bold; }
.spin { display: flex; flex-direction: column; justify-content: space-around; align-items: center; width: 13px; border: 1px solid #777; background: #dcdad5; }
.spin .up { border-width: 2px; border-top: 0; border-bottom-color: #111; }
.spin .down { border-width: 2px; border-bottom: 0; border-top-color: #111; }
.help { height: 32px; margin-top: 2px; padding: 1px 3px; border: 1px solid #999; background: #eeeef7; font-weight: bold; }

.w-status { display: flex; align-items: center; justify-content: space-between; height: 19px; padding-left: 3px; border-top: 1px solid #93a3bd; background: #bfcade; color: #27395d; }
.zoom { display: flex; align-items: center; padding-right: 1px; gap: 6px; }
.zoom .pct { margin: 0 -1px 0 2px; font-size: 10px; }
.zoom input { appearance: none; width: 84px; height: 12px; margin: 0 -6px; background: linear-gradient(#71809b, #71809b) center / 100% 1px no-repeat; }
.zoom input::-webkit-slider-thumb { appearance: none; width: 7px; height: 11px; border: 1px solid #71809b; border-radius: 1px 1px 3px 3px; background: #eef2f9; }
.zoom .gripper { align-self: flex-end; }
</style>
